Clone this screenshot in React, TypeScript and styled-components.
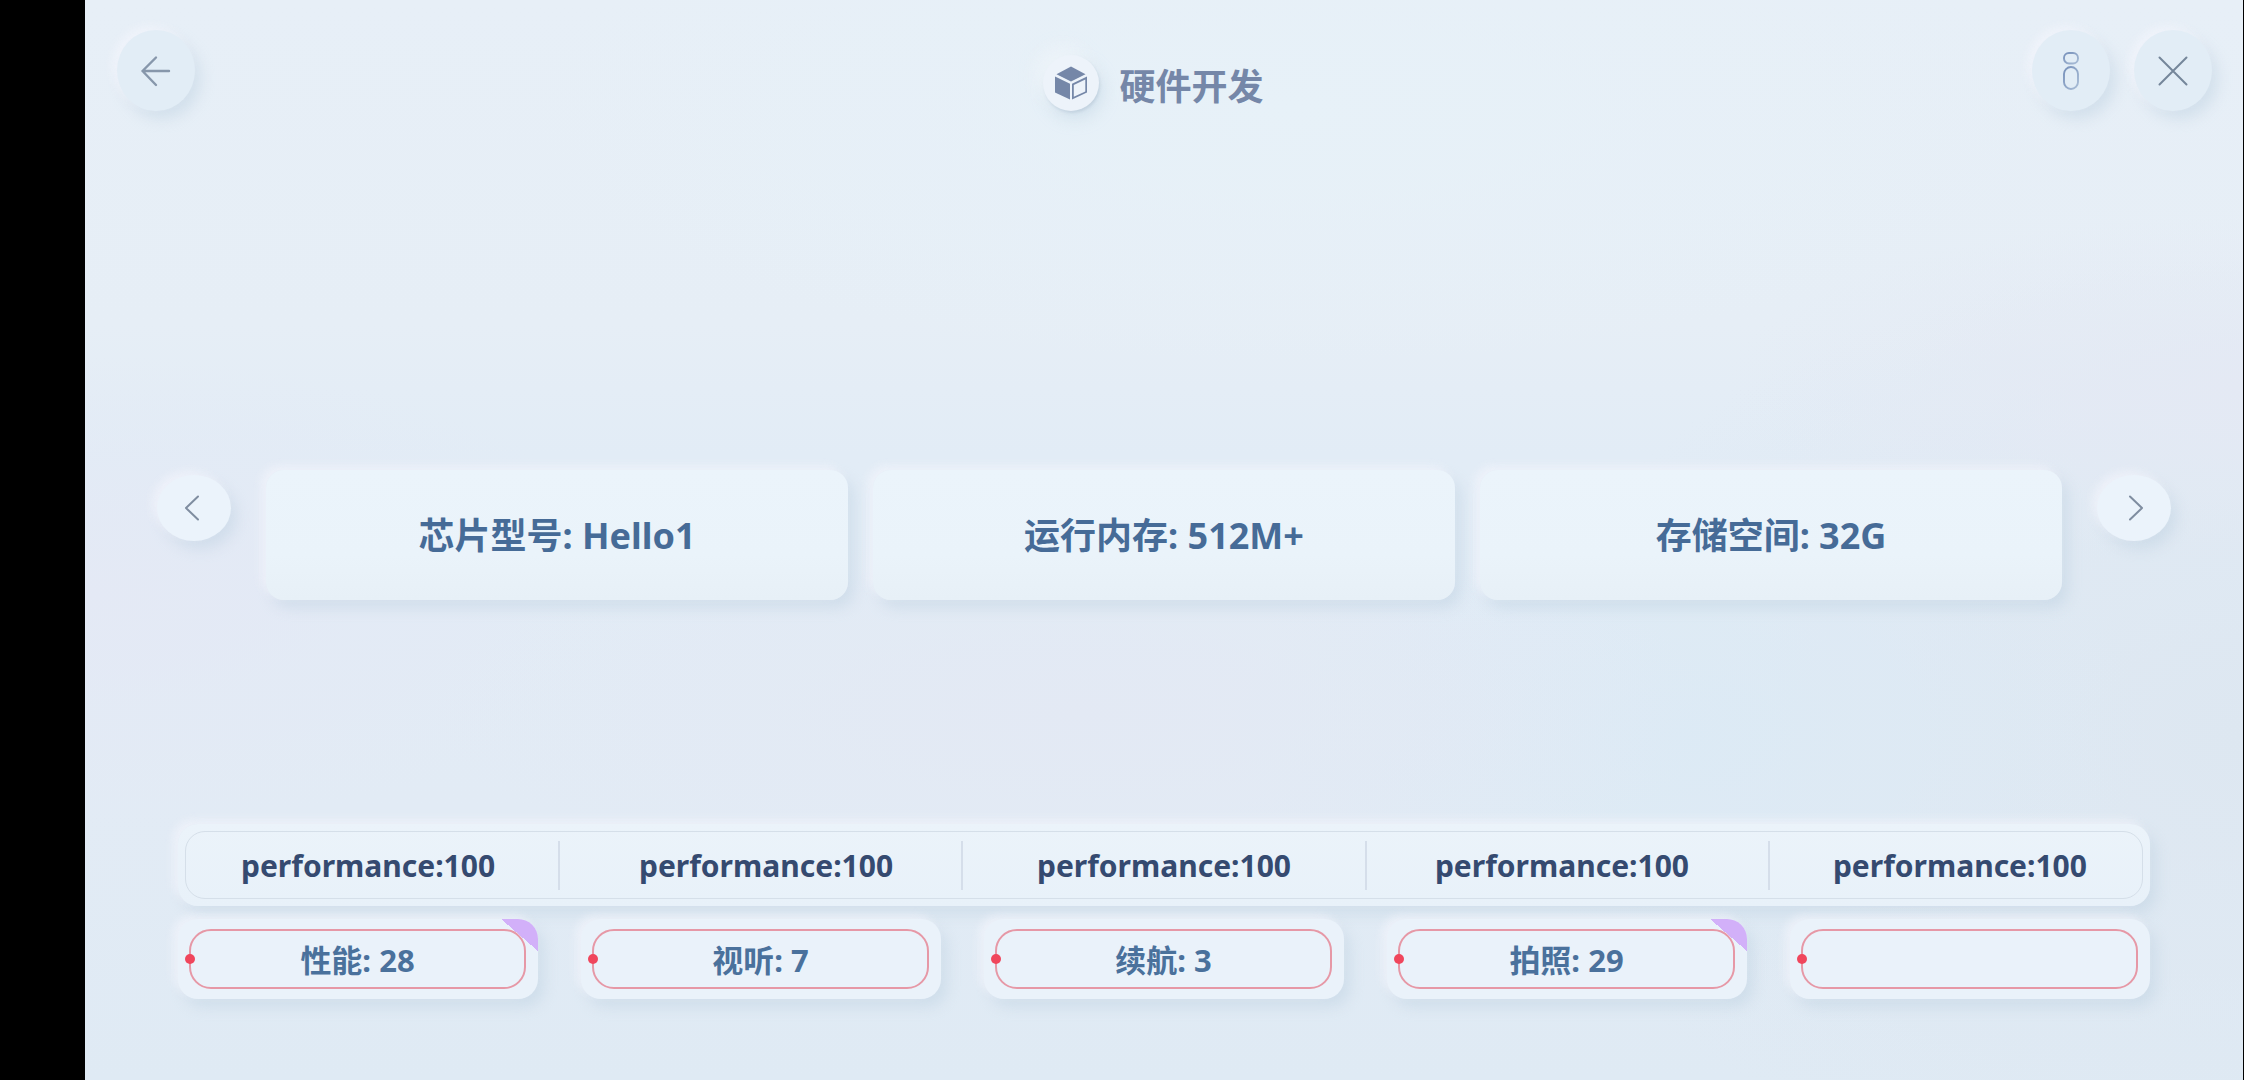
import React from "react";
import styled, { createGlobalStyle, css } from "styled-components";

const GlobalStyle = createGlobalStyle`
  * {
    box-sizing: border-box;
  }

  body {
    margin: 0;
    background: #000;
    font-family: "Noto Sans", "Noto Sans CJK SC", sans-serif;
    font-weight: 700;
  }

  button {
    border: 0;
    padding: 0;
    font: inherit;
    cursor: pointer;
  }
`;

const raised = css`
  box-shadow:
    -5px -4px 10px rgba(246, 247, 253, 0.6),
    6px 8px 14px rgba(183, 204, 222, 0.42);
`;

const Page = styled.div`
  display: flex;
  min-height: 100vh;
  padding: 0 1px 0 85px;
  background: #000;
`;

const Screen = styled.main`
  flex: 1;
  min-width: 0;
  display: grid;
  grid-template-rows: auto 11fr auto 7fr auto;
  padding-bottom: 81px;
  background:
    radial-gradient(ellipse 36% 24% at 56% 10%, #e7f1f8 0%, rgba(231, 241, 248, 0) 100%),
    radial-gradient(ellipse 26% 22% at 0% 55%, #e4e9f5 0%, rgba(228, 233, 245, 0) 100%),
    radial-gradient(ellipse 24% 16% at 100% 36%, #e4e9f4 0%, rgba(228, 233, 244, 0) 100%),
    radial-gradient(ellipse 30% 18% at 46% 66%, #e3e9f4 0%, rgba(227, 233, 244, 0) 100%),
    radial-gradient(ellipse 22% 24% at 74% 68%, #dceaf5 0%, rgba(220, 234, 245, 0) 100%),
    radial-gradient(ellipse 34% 44% at 100% 68%, #dde7f1 0%, rgba(221, 231, 241, 0) 100%),
    linear-gradient(180deg, #e7eff7 0%, #e6eef6 30%, #e2ecf6 42%, #e2ebf5 75%, #dfeaf4 100%);
`;

const Header = styled.header`
  grid-row: 1;
  display: grid;
  grid-template-columns: 1fr auto 1fr;
  align-items: start;
  padding: 30px 31px 0 32px;
`;

const Actions = styled.div`
  display: flex;
  justify-content: flex-end;
  gap: 24px;
`;

const RoundButton = styled.button`
  display: grid;
  place-items: center;
  width: 78px;
  height: 81px;
  border-radius: 50%;
  background: #e2edf6;
  color: #8797ab;
  ${raised}
`;

const Brand = styled.div`
  display: flex;
  align-items: flex-start;
  gap: 20px;
  padding: 25px 22px 0 0;
`;

const BrandBadge = styled.span`
  display: grid;
  place-items: center;
  width: 56px;
  height: 56px;
  border-radius: 50%;
  background: #edf3fa;
  color: #7587a8;
  box-shadow:
    -8px -8px 16px rgba(240, 245, 250, 0.7),
    1px 2px 3px rgba(160, 180, 200, 0.4),
    4px 8px 16px rgba(183, 204, 222, 0.4);
`;

const Title = styled.h1`
  margin: 0;
  font-size: 36px;
  line-height: 64px;
  font-weight: 700;
  color: #7587a8;
`;

const Carousel = styled.section`
  grid-row: 3;
  display: flex;
  align-items: flex-start;
  gap: 35px;
  padding: 0 72px;
`;

const StepButton = styled.button<{ $side: "left" | "right" }>`
  flex: none;
  display: grid;
  place-items: center;
  width: 74px;
  height: 66px;
  margin-top: 5px;
  padding: ${({ $side }) => ($side === "left" ? "0 4px 0 0" : "0 0 0 4px")};
  border-radius: 50%;
  background: #ebf3fb;
  color: #7f8da0;
  ${raised}
`;

const Cards = styled.div`
  flex: 1;
  display: grid;
  grid-template-columns: repeat(3, 1fr);
  gap: 25px;
`;

const SpecCard = styled.button`
  height: 130px;
  padding-top: 2px;
  border-radius: 18px;
  background: linear-gradient(180deg, #ebf4fb 0%, #eaf3fa 65%, #e7f0f7 100%);
  color: #466b97;
  font-size: 36px;
  line-height: 48px;
  ${raised}
`;

const Stats = styled.section`
  grid-row: 5;
  display: grid;
  gap: 13px;
  padding: 0 93px;
`;

const Bar = styled.div`
  padding: 7px;
  border-radius: 20px;
  background: linear-gradient(180deg, #ebf3fa, #e8f1f9);
  ${raised}
`;

const BarInner = styled.div`
  display: grid;
  height: 68px;
  border: 1px solid #d5dfe9;
  border-radius: 20px;
`;

const BarLabels = styled.div`
  grid-area: 1 / 1;
  display: flex;
  align-items: center;
  justify-content: space-between;
  padding: 2px 55px 0;
  color: #354a70;
  font-size: 30px;
  line-height: 40px;
`;

const BarDividers = styled.div`
  grid-area: 1 / 1;
  display: flex;
  align-items: center;
  justify-content: space-between;
  padding: 0 19%;
`;

const Divider = styled.span`
  width: 2px;
  height: 49px;
  background: #d5deea;
`;

const Chips = styled.div`
  display: grid;
  grid-template-columns: repeat(5, 1fr);
  gap: 43px;
`;

const Chip = styled.button`
  position: relative;
  height: 80px;
  padding: 10px 12px 10px 11px;
  border-radius: 20px;
  background: #eaf2fa;
  color: #4a719c;
  font-size: 31px;
  line-height: 40px;
  ${raised}
`;

const ChipFrame = styled.span`
  position: relative;
  display: grid;
  place-items: center;
  height: 60px;
  padding-top: 2px;
  border: 2px solid #e698a6;
  border-radius: 22px;

  &::before {
    content: "";
    position: absolute;
    left: -6px;
    top: 23px;
    width: 10px;
    height: 10px;
    border-radius: 50%;
    background: #f0465c;
  }
`;

const Corner = styled.span`
  position: absolute;
  top: 0;
  right: 0;
  width: 37px;
  height: 32px;
  border-top-right-radius: 20px;
  background: linear-gradient(to top right, transparent 50%, #d2b0f9 50%);
`;

const specs = ["芯片型号: Hello1", "运行内存: 512M+", "存储空间: 32G"];

const totals = [
  "performance:100",
  "performance:100",
  "performance:100",
  "performance:100",
  "performance:100",
];

const chips = [
  { text: "性能: 28", marked: true },
  { text: "视听: 7", marked: false },
  { text: "续航: 3", marked: false },
  { text: "拍照: 29", marked: true },
  { text: "", marked: false },
];

const BackIcon = () => (
  <svg width="32" height="32" viewBox="0 0 32 32" fill="none" stroke="currentColor" strokeWidth="2.4" strokeLinecap="round" strokeLinejoin="round" aria-hidden="true">
    <path d="M29 16H2.500M16 2.500L2.500 16L16 30" />
  </svg>
);

const InfoIcon = () => (
  <svg width="18" height="38" viewBox="0 0 18 38" fill="none" strokeWidth="1.900" aria-hidden="true">
    <defs>
      <linearGradient id="info-stroke" x1="0" y1="0" x2="1" y2="1">
        <stop offset="0" stopColor="#7690ba" />
        <stop offset="1" stopColor="#a9bdd6" />
      </linearGradient>
    </defs>
    <rect x="2" y="1" width="14" height="10.500" rx="5" stroke="url(#info-stroke)" />
    <rect x="2" y="15" width="14" height="22" rx="7" stroke="url(#info-stroke)" />
  </svg>
);

const CloseIcon = () => (
  <svg width="30" height="30" viewBox="0 0 30 30" fill="none" stroke="#75869a" strokeWidth="2" strokeLinecap="round" aria-hidden="true">
    <path d="M1.500 1.500L28.500 28.500M28.500 1.500L1.500 28.500" />
  </svg>
);

const CubeIcon = () => (
  <svg width="34" height="34" viewBox="0 0 34 34" fill="currentColor" aria-hidden="true">
    <path d="M17 .5L31.500 8.200L17 15.500L2.500 8.200Z" />
    <path d="M1 10.500L16 17.800V33.500L1 26.500Z" />
    <path fillRule="evenodd" d="M18 17.800L33 10.500V26.500L18 33.500ZM19.800 19V30.800L31.300 25.400V13.400Z" />
  </svg>
);

const ChevronIcon = ({ direction }: { direction: "left" | "right" }) => (
  <svg width="16" height="26" viewBox="0 0 16 26" fill="none" stroke="currentColor" strokeWidth="2" strokeLinecap="round" strokeLinejoin="round" aria-hidden="true">
    <path d={direction === "left" ? "M14 1.500L2 13L14 24.500" : "M2 1.500L14 13L2 24.500"} />
  </svg>
);

export default function App() {
  return (
    <>
      <GlobalStyle />
      <Page>
        <Screen>
          <Header>
            <RoundButton type="button" aria-label="返回">
              <BackIcon />
            </RoundButton>
            <Brand>
              <BrandBadge>
                <CubeIcon />
              </BrandBadge>
              <Title>硬件开发</Title>
            </Brand>
            <Actions>
              <RoundButton type="button" aria-label="信息">
                <InfoIcon />
              </RoundButton>
              <RoundButton type="button" aria-label="关闭">
                <CloseIcon />
              </RoundButton>
            </Actions>
          </Header>

          <Carousel>
            <StepButton type="button" $side="left" aria-label="上一组">
              <ChevronIcon direction="left" />
            </StepButton>
            <Cards>
              {specs.map((spec) => (
                <SpecCard type="button" key={spec}>
                  {spec}
                </SpecCard>
              ))}
            </Cards>
            <StepButton type="button" $side="right" aria-label="下一组">
              <ChevronIcon direction="right" />
            </StepButton>
          </Carousel>

          <Stats>
            <Bar>
              <BarInner>
                <BarDividers>
                  {totals.slice(1).map((_, index) => (
                    <Divider key={index} />
                  ))}
                </BarDividers>
                <BarLabels>
                  {totals.map((total, index) => (
                    <span key={index}>{total}</span>
                  ))}
                </BarLabels>
              </BarInner>
            </Bar>
            <Chips>
              {chips.map((chip, index) => (
                <Chip type="button" key={index} aria-label={chip.text || "空"}>
                  {chip.marked && <Corner />}
                  <ChipFrame>{chip.text}</ChipFrame>
                </Chip>
              ))}
            </Chips>
          </Stats>
        </Screen>
      </Page>
    </>
  );
}
